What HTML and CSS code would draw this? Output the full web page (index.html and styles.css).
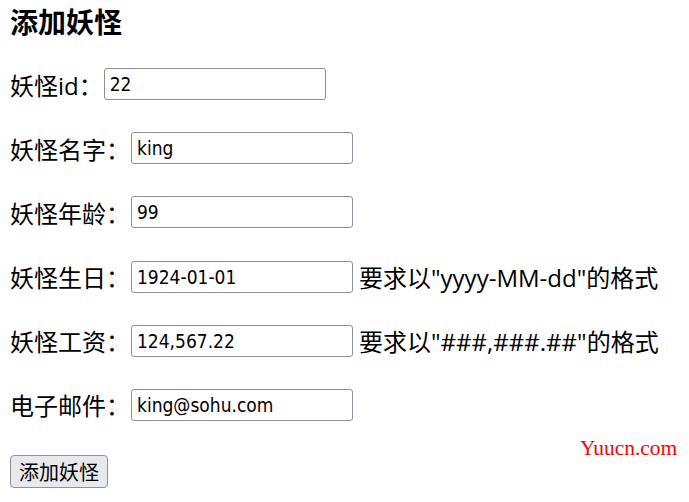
FILE: index.html
```html
<!DOCTYPE html>
<html lang="zh-CN">
<head>
  <meta charset="utf-8">
  <title>添加妖怪</title>
  <link rel="stylesheet" href="styles.css">
</head>
<body>
  <!-- Title -->
  <h1 class="title">添加妖怪</h1>
  <!-- Form with one field per row -->
  <form class="monster-form" action="#" method="post">
    <div class="row">
      <label for="id">妖怪id：</label><input type="text" id="id" name="id" value="22">
    </div>
    <div class="row">
      <label for="name">妖怪名字：</label><input type="text" id="name" name="name" value="king">
    </div>
    <div class="row">
      <label for="age">妖怪年龄：</label><input type="text" id="age" name="age" value="99">
    </div>
    <div class="row">
      <label for="birthday">妖怪生日：</label><input type="text" id="birthday" name="birthday" value="1924-01-01">
      <span class="hint">要求以"yyyy-MM-dd"的格式</span>
    </div>
    <div class="row">
      <label for="salary">妖怪工资：</label><input type="text" id="salary" name="salary" value="124,567.22">
      <span class="hint">要求以"###,###.##"的格式</span>
    </div>
    <div class="row">
      <label for="email">电子邮件：</label><input type="text" id="email" name="email" value="king@sohu.com">
    </div>
    <div class="actions">
      <button type="submit" class="btn">添加妖怪</button>
    </div>
  </form>
  <!-- Site watermark -->
  <div class="watermark">Yuucn.com</div>
</body>
</html>
```

FILE: styles.css
```css
body {
  margin: 0;
  padding: 5px 10px;
  font-family: "Open Sans", "Noto Sans CJK SC", sans-serif;
  color: #000;
  background: #fff;
}
.title {
  margin: 0;
  font-family: "Noto Sans CJK SC", sans-serif;
  font-size: 28px;
  line-height: 32px;
  font-weight: bold;
}
.monster-form {
  display: flex;
  flex-direction: column;
  gap: 32.2px;
  margin-top: 31px;
}
.row {
  display: flex;
  align-items: center;
  height: 32px;
  font-size: 24px;
}
.row input {
  box-sizing: border-box;
  width: 222px;
  height: 32px;
  margin-left: 1px;
  padding: 0 5px;
  border: 1px solid #8f8f9d;
  border-radius: 3px;
  font-family: "DejaVu Sans Condensed", "DejaVu Sans", sans-serif;
  font-stretch: condensed;
  font-size: 19px;
  color: #000;
}
.hint {
  margin-left: 6px;
}
.actions {
  margin-top: 2px;
}
.btn {
  box-sizing: border-box;
  height: 33px;
  padding: 0 8px;
  border: 1px solid #8f8f9d;
  border-radius: 4px;
  background: #e9e9ed; /* light gray button */
  font-family: "Noto Sans CJK SC", sans-serif;
  font-size: 20px;
  color: #000;
}
.watermark {
  position: absolute;
  top: 436px;
  left: 580px;
  color: #ff0000;
  font-family: "Liberation Serif", serif;
  font-size: 21.5px;
}
```
